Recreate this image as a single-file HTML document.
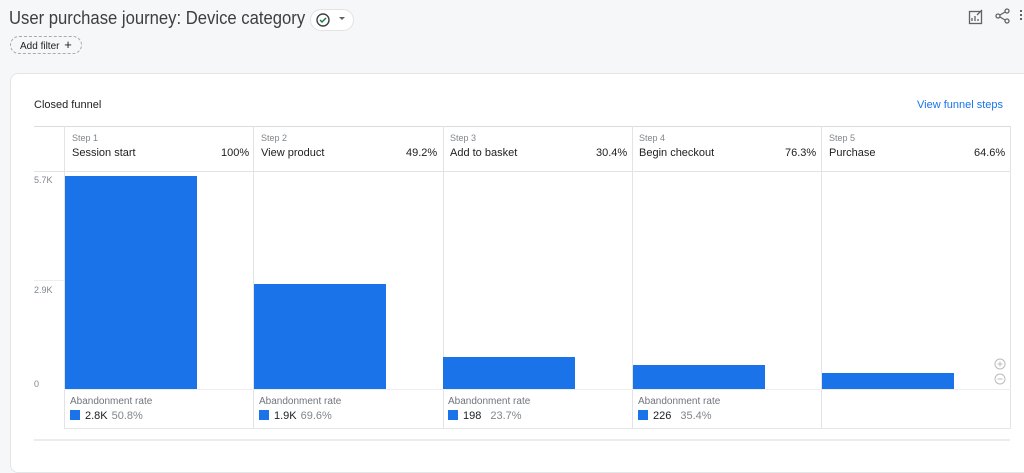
<!DOCTYPE html>
<html><head><meta charset="utf-8"><style>
*{margin:0;padding:0;box-sizing:border-box}
body{width:1024px;height:443px;overflow:hidden;background:#f6f7f9;font-family:"Liberation Sans",sans-serif;color:#202124;position:relative}
.a{position:absolute}
.card{left:10px;top:73px;width:1030px;height:400px;background:#fff;border:1px solid #e3e5e8;border-radius:8px}
.col{position:absolute;top:126px;height:303px;border-left:1px solid #e3e3e3;border-right:1px solid #e3e3e3}
.hdr{position:absolute;top:126px;height:46px;border-top:1px solid #dadce0;border-bottom:1px solid #e3e3e3}
.s{font-size:9px;color:#80868b}
.n{font-size:11px;color:#202124}
.bar{position:absolute;background:#1a73e8;width:132px}
.ab{font-size:10px;color:#70757a}
.lg{font-size:11px;color:#202124}
.lg i{display:inline-block;width:10px;height:10px;background:#1a73e8;vertical-align:-1px;margin-right:5px}
.lg span{color:#80868b;margin-left:4px}
</style></head><body>
<div class="a" style="left:9px;top:8px;font-size:18px;color:#3c4043;white-space:nowrap;transform:scaleX(0.925);transform-origin:0 0">User purchase journey: Device category</div>
<div class="a" style="left:310px;top:9px;width:44px;height:22px;border:1px solid #e3e3e3;border-radius:11px;background:#fff"></div>
<svg class="a" style="left:315px;top:12px" width="16" height="16"><circle cx="8" cy="8" r="6" fill="none" stroke="#3c4043" stroke-width="1.4"/><path d="M5 8l2 2 4-4" fill="none" stroke="#188038" stroke-width="1.5"/></svg>
<div class="a" style="left:339px;top:17px;border-left:3px solid transparent;border-right:3px solid transparent;border-top:3px solid #5f6368"></div>
<div class="a" style="left:10px;top:36px;width:72px;height:18px;border:1px dashed #aaa;border-radius:9px;font-size:10px;line-height:16px;padding-left:9px;color:#202124">Add filter <span style="font-size:13px;margin-left:2px">+</span></div>
<svg class="a" style="left:968px;top:9px" width="16" height="16"><rect x="1.5" y="2.5" width="12" height="12" fill="none" stroke="#5f6368" stroke-width="1.3"/><path d="M4 12V9M7 12V7M10 12V10M9 6l5-5" stroke="#5f6368" stroke-width="1.3" fill="none"/></svg>
<svg class="a" style="left:995px;top:8px" width="16" height="16"><circle cx="12" cy="3" r="2" fill="none" stroke="#5f6368" stroke-width="1.3"/><circle cx="3" cy="8" r="2" fill="none" stroke="#5f6368" stroke-width="1.3"/><circle cx="12" cy="13" r="2" fill="none" stroke="#5f6368" stroke-width="1.3"/><path d="M5 7l5-3M5 9l5 3" stroke="#5f6368" stroke-width="1.3"/></svg>
<div class="a" style="left:1020px;top:10px;width:2px;height:2px;background:#5f6368;box-shadow:0 4px #5f6368,0 8px #5f6368"></div>
<div class="a card"></div>
<div class="a" style="left:34px;top:99px;font-size:11px">Closed funnel</div>
<div class="a" style="left:917px;top:99px;font-size:11px;color:#1a73e8">View funnel steps</div>
<div class="hdr" style="left:34px;width:976px"></div>
<div class="a" style="left:34px;top:439px;width:976px;height:2px;background:#ececec"></div>
<div class="a s" style="left:34px;top:175px">5.7K</div>
<div class="a s" style="left:34px;top:285px">2.9K</div>
<div class="a s" style="left:34px;top:379px">0</div>
<div class="a" style="left:34px;top:280px;width:30px;height:1px;background:#eee"></div>

<div class="col" style="left:64px;width:190px"></div>
<div class="col" style="left:253px;width:191px"></div>
<div class="col" style="left:443px;width:190px"></div>
<div class="col" style="left:632px;width:190px"></div>
<div class="col" style="left:821px;width:190px"></div>

<div class="a s" style="left:72px;top:133px">Step 1</div><div class="a n" style="left:72px;top:147px">Session start</div><div class="a n" style="left:221px;top:147px">100%</div>
<div class="a s" style="left:261px;top:133px">Step 2</div><div class="a n" style="left:261px;top:147px">View product</div><div class="a n" style="left:406px;top:147px">49.2%</div>
<div class="a s" style="left:450px;top:133px">Step 3</div><div class="a n" style="left:450px;top:147px">Add to basket</div><div class="a n" style="left:596px;top:147px">30.4%</div>
<div class="a s" style="left:639px;top:133px">Step 4</div><div class="a n" style="left:639px;top:147px">Begin checkout</div><div class="a n" style="left:785px;top:147px">76.3%</div>
<div class="a s" style="left:829px;top:133px">Step 5</div><div class="a n" style="left:829px;top:147px">Purchase</div><div class="a n" style="left:974px;top:147px">64.6%</div>

<div class="bar" style="left:65px;top:176px;height:213px"></div>
<div class="bar" style="left:254px;top:284px;height:105px"></div>
<div class="bar" style="left:443px;top:357px;height:32px"></div>
<div class="bar" style="left:633px;top:365px;height:24px"></div>
<div class="bar" style="left:822px;top:373px;height:16px"></div>
<div class="a" style="left:64px;top:389px;width:947px;height:1px;background:#eee"></div>
<div class="a" style="left:64px;top:428px;width:947px;height:1px;background:#e6e6e6"></div>

<div class="a ab" style="left:70px;top:396px">Abandonment rate</div><div class="a lg" style="left:70px;top:410px"><i></i>2.8K<span>50.8%</span></div>
<div class="a ab" style="left:259px;top:396px">Abandonment rate</div><div class="a lg" style="left:259px;top:410px"><i></i>1.9K<span>69.6%</span></div>
<div class="a ab" style="left:448px;top:396px">Abandonment rate</div><div class="a lg" style="left:448px;top:410px"><i></i>198<span style="margin-left:9px">23.7%</span></div>
<div class="a ab" style="left:638px;top:396px">Abandonment rate</div><div class="a lg" style="left:638px;top:410px"><i></i>226<span style="margin-left:9px">35.4%</span></div>
<svg class="a" style="left:993px;top:357px" width="14" height="30"><circle cx="7" cy="7" r="5" fill="none" stroke="#bbb"/><path d="M4.5 7h5M7 4.5v5" stroke="#bbb"/><circle cx="7" cy="22" r="5" fill="none" stroke="#bbb"/><path d="M4.5 22h5" stroke="#bbb"/></svg>
</body></html>
